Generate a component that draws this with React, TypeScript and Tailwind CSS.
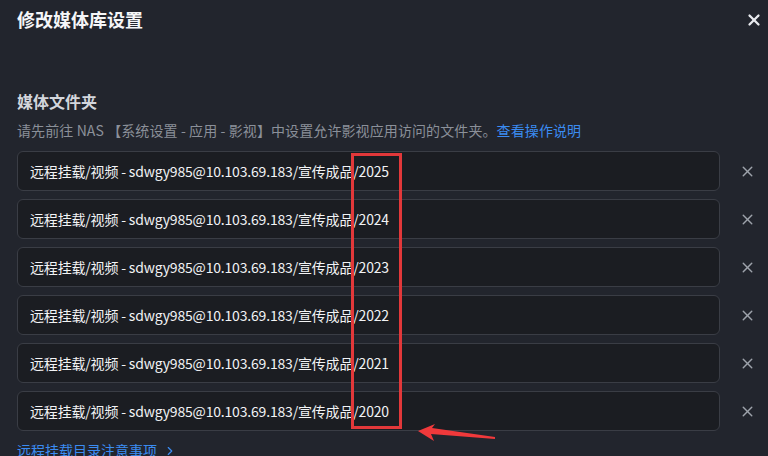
import { X, ChevronRight } from 'lucide-react';

const folders = ['2025', '2024', '2023', '2022', '2021', '2020'];
const prefix = '远程挂载/视频 - sdwgy985@10.103.69.183/宣传成品';

const FolderRow = ({ year }: { year: string }) => (
  <div className="flex items-center">
    <div className="flex h-[40px] flex-1 items-center rounded-[6px] border border-[#3a3d45] bg-[#1b1d22] pl-[12px] text-[14px] tracking-[-0.18px] text-[#f2f3f5]">
      {prefix}/{year}
    </div>
    <button className="flex w-[48px] shrink-0 justify-end pr-[12px] text-[#9ea3ab]">
      <X size={17} strokeWidth={2} />
    </button>
  </div>
);

export default function App() {
  return (
    <div
      className="relative h-[456px] w-[768px] overflow-hidden bg-[#22252d]"
      style={{ fontFamily: '"Noto Sans CJK SC", "Noto Sans", sans-serif' }}
    >
      <div className="flex items-center justify-between pl-[17px] pr-[5px] pt-[6px]">
        <h1 className="text-[18px] font-bold text-[#f5f6f8]">修改媒体库设置</h1>
        <X size={18} strokeWidth={3} className="text-[#e8eaee]" />
      </div>

      <div className="pl-[17px] pt-[56px]">
        <h2 className="text-[16px] font-bold leading-[24px] text-[#d3d6dc]">媒体文件夹</h2>
        <p className="mt-[7px] text-[14px] leading-[20px] tracking-[0.1px] text-[#8b9099]">
          请先前往 NAS 【系统设置 - 应用 - 影视】中设置允许影视应用访问的文件夹。
          <span className="text-[#3b8cf2]">查看操作说明</span>
        </p>
        <div className="mt-[11px] flex flex-col gap-[8px]">
          {folders.map((y) => (
            <FolderRow key={y} year={y} />
          ))}
        </div>
        <div className="mt-[9px] flex items-center gap-[6px] text-[14px] text-[#3b8cf2]">
          远程挂载目录注意事项
          <ChevronRight size={14} strokeWidth={2} />
        </div>
      </div>

      {/* annotation: highlight box over the year column */}
      <div className="absolute left-[351px] top-[153px] h-[276px] w-[51px] border-[3px] border-[#e2383a]" />
      <svg className="absolute left-[415px] top-[422px]" width="84" height="22" viewBox="0 0 84 22">
        <polygon points="3,9 20,2 17,6 80,15 80,17 16,12 19,19" fill="#f0393b" />
      </svg>
    </div>
  );
}
